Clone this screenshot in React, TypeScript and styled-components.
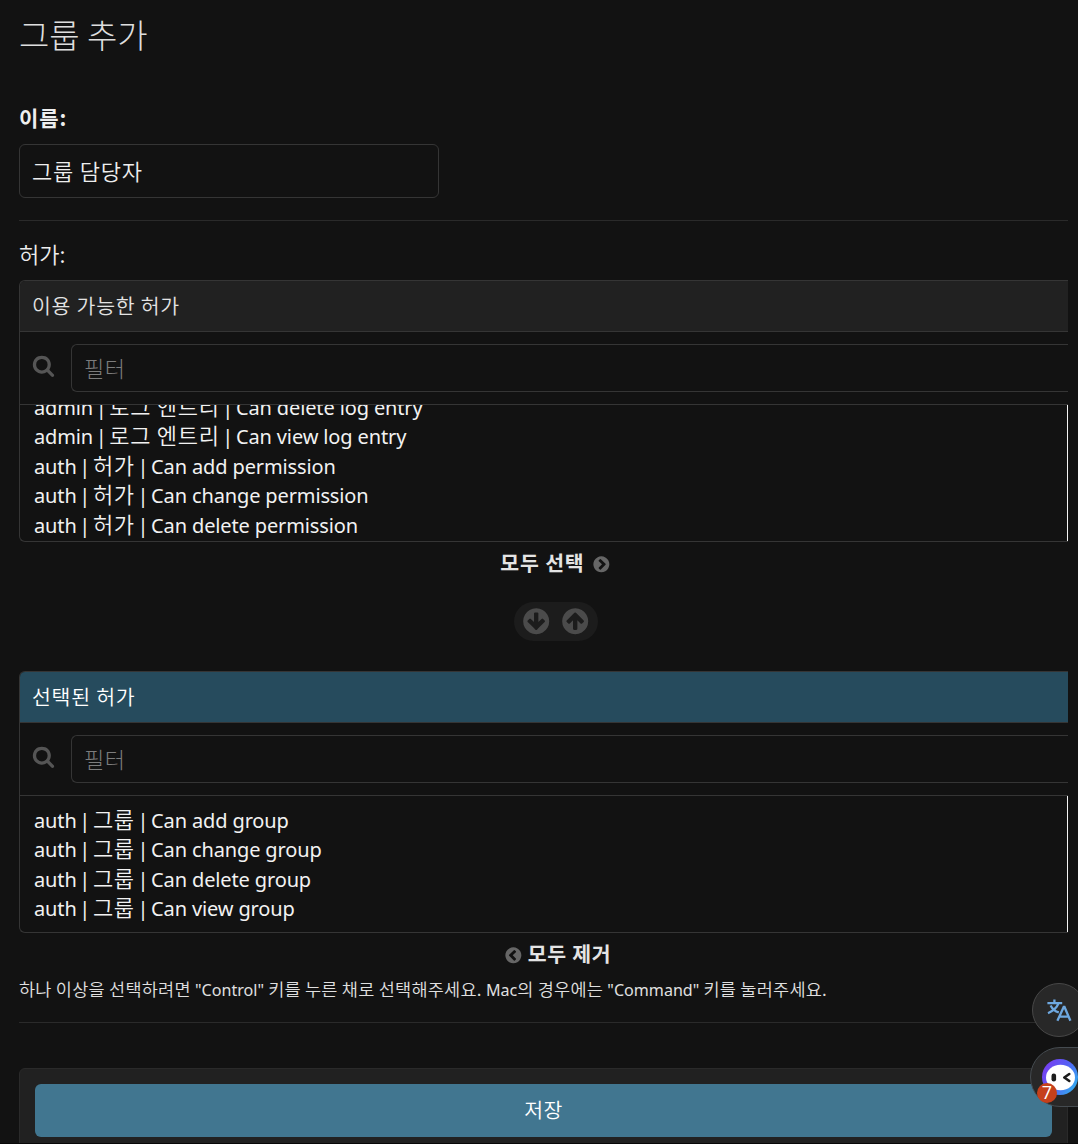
import React from "react";
import styled, { createGlobalStyle } from "styled-components";

const Global = createGlobalStyle`
  * { box-sizing: border-box; }
  body {
    margin: 0;
    background: #121212;
    color: #eee;
    font-family: "Noto Sans", "Noto Sans CJK KR", sans-serif;
    overflow: hidden;
  }
`;

const Page = styled.main`
  height: 1144px;
  padding: 0 10px 0 19px;
  display: flex;
  flex-direction: column;
  overflow: hidden;
  position: relative;
  border-bottom: 1px solid #080808;
`;

const Ko = styled.span<{ $size: number; $gap?: number; $weight?: number }>`
  font-family: "Noto Sans CJK KR", sans-serif;
  font-size: ${(p) => p.$size}px;
  letter-spacing: ${(p) => p.$gap ?? 0}px;
  font-weight: ${(p) => p.$weight ?? 350};
`;

const Title = styled.h1`
  margin: 0;
  height: 72px;
  flex: none;
  line-height: 68px;
  color: #dedede;
  font-weight: 300;
  white-space: nowrap;
`;

const FieldLabel = styled.label<{ $top: number; $height: number }>`
  display: block;
  flex: none;
  margin-top: ${(p) => p.$top}px;
  height: ${(p) => p.$height}px;
  line-height: 30px;
  white-space: nowrap;
`;

const NameInput = styled.div`
  width: 420px;
  height: 54px;
  flex: none;
  border: 1px solid #353535;
  border-radius: 6px;
  padding-left: 12px;
  line-height: 50px;
  white-space: nowrap;
`;

const Divider = styled.hr<{ $top: number }>`
  width: 100%;
  height: 1px;
  flex: none;
  border: 0;
  margin: ${(p) => p.$top}px 0 0;
  background: #2a2a2a;
`;

const Selector = styled.section`
  flex: none;
  height: 262px;
  display: flex;
  flex-direction: column;
  border: 1px solid #353535;
  border-right: 0;
  border-radius: 6px 0 0 6px;
  overflow: hidden;
`;

const SelectorHead = styled.h2<{ $chosen?: boolean }>`
  margin: 0;
  height: 51px;
  flex: none;
  padding-left: 12px;
  line-height: 47px;
  border-bottom: 1px solid #353535;
  background: ${(p) => (p.$chosen ? "#264b5d" : "#212121")};
  color: ${(p) => (p.$chosen ? "#fff" : "#e4e4e4")};
  white-space: nowrap;
`;

const FilterRow = styled.div`
  height: 73px;
  flex: none;
  display: flex;
  padding: 12px 0 12px 12px;
  border-bottom: 1px solid #353535;
`;

const FilterIcon = styled.svg`
  width: 23px;
  height: 23px;
  margin: 10px 16px 0 0;
  fill: #555;
`;

const FilterInput = styled.div`
  flex: 1;
  height: 48px;
  border: 1px solid #353535;
  border-right: 0;
  border-radius: 6px 0 0 6px;
  padding-left: 12px;
  line-height: 44px;
  color: #7c7c7c;
  white-space: nowrap;
`;

const OptionList = styled.ul<{ $scrolled?: boolean }>`
  margin: 0;
  flex: 1;
  min-height: 0;
  padding: ${(p) => (p.$scrolled ? "0 0 3px 14px" : "7.5px 0 0 14px")};
  display: flex;
  flex-direction: column;
  justify-content: ${(p) => (p.$scrolled ? "flex-end" : "flex-start")};
  overflow: hidden;
  list-style: none;
  border-right: 1px solid #f4f4f4;
`;

const Option = styled.li`
  flex: none;
  height: 29.5px;
  line-height: 29.5px;
  font-size: 20px;
  letter-spacing: -0.13px;
  white-space: pre;
  color: #f2f2f2;
`;

const Bar = styled.span`
  margin: 0 -2.4px;
`;

const BulkLink = styled.div<{ $shift: number; $gap: number }>`
  flex: none;
  height: 42px;
  display: flex;
  justify-content: center;
  align-items: center;
  gap: ${(p) => p.$gap}px;
  color: #e4e4e4;
  line-height: 40px;
  padding-left: ${(p) => p.$shift}px;

  > span {
    margin-top: -2px;
  }
`;

const ChevronBadge = styled.svg<{ $flip?: boolean }>`
  width: 18.7px;
  height: 18.7px;
  margin-top: 3px;
  fill: #666;
  transform: ${(p) => (p.$flip ? "rotate(180deg)" : "none")};
`;

const Chooser = styled.div`
  flex: none;
  align-self: center;
  width: 84px;
  height: 39px;
  margin: 18px 0 30px 25px;
  border-radius: 20px;
  background: #1c1c1c;
  display: flex;
  align-items: center;
  justify-content: center;
  gap: 8.6px;
`;

const ArrowBadge = styled.svg<{ $flip?: boolean }>`
  width: 30.4px;
  height: 30.4px;
  fill: #4b4b4b;
  transform: ${(p) => (p.$flip ? "rotate(180deg)" : "none")};
`;

const Help = styled.p`
  margin: 0;
  height: 47px;
  flex: none;
  line-height: 28px;
  font-size: 16.1px;
  color: #e0e0e0;
  white-space: nowrap;
`;

const SubmitRow = styled.div`
  margin-top: 45px;
  flex: none;
  height: 100px;
  padding: 15px;
  border: 1px solid #2a2a2a;
  border-radius: 6px;
  background: #212121;
`;

const SaveButton = styled.div`
  height: 53px;
  border-radius: 6px;
  background: #417690;
  color: #fff;
  text-align: center;
  line-height: 50px;
`;

const TranslateBubble = styled.div`
  position: absolute;
  left: 1032px;
  top: 983px;
  width: 54px;
  height: 54px;
  border-radius: 50%;
  border: 1px solid #484848;
  background: #282828;
  svg { display: block; margin: 13px 0 0 13px; }
`;

const AssistantTab = styled.div`
  position: absolute;
  left: 1030px;
  top: 1047px;
  width: 60px;
  height: 60px;
  border-radius: 30px 0 0 30px;
  border: 1px solid #454b50;
  background: #282828;
  svg { display: block; margin: 10px 0 0 10px; }
`;

const Count = styled.span`
  position: absolute;
  left: 6px;
  top: 35px;
  width: 20px;
  height: 20px;
  border-radius: 50%;
  background: #c5401c;
  color: #fff;
  font-family: "Open Sans", sans-serif;
  font-size: 18px;
  line-height: 19px;
  text-align: center;
`;

const SearchGlyph = () => (
  <FilterIcon viewBox="0 0 1792 1792">
    <path d="M1216 832q0-185-131.5-316.5t-316.5-131.5-316.5 131.5-131.5 316.5 131.5 316.5 316.5 131.5 316.5-131.5 131.5-316.5zm512 832q0 52-38 90t-90 38q-54 0-90-38l-343-342q-179 124-399 124-143 0-273.5-55.5t-225-150-150-225-55.5-273.5 55.5-273.5 150-225 225-150 273.5-55.5 273.5 55.5 225 150 150 225 55.5 273.5q0 220-124 399l343 343q37 37 37 90z" />
  </FilterIcon>
);

const DISC =
  "q0 209-103 385.5t-279.5 279.5-385.5 103-385.5-103-279.5-279.5-103-385.5 103-385.5 279.5-279.5 385.5-103 385.5 103 279.5 279.5 103 385.5z";

const Chevron = ({ flip }: { flip?: boolean }) => (
  <ChevronBadge $flip={flip} viewBox="0 0 1792 1792">
    <path d={"M1037 1395l102-102q19-19 19-45t-19-45l-307-307 307-307q19-19 19-45t-19-45l-102-102q-19-19-45-19t-45 19l-454 454q-19 19-19 45t19 45l454 454q19 19 45 19t45-19zm627-499" + DISC} />
  </ChevronBadge>
);

const Arrow = ({ flip }: { flip?: boolean }) => (
  <ArrowBadge $flip={flip} viewBox="0 0 1792 1792">
    <path d={"M1412 897q0-27-18-45l-91-91q-18-18-45-18t-45 18l-189 189v-502q0-26-19-45t-45-19h-128q-26 0-45 19t-19 45v502l-189-189q-19-19-45-19t-45 19l-91 91q-18 18-18 45t18 45l362 362 91 91q18 18 45 18t45-18l91-91 362-362q18-18 18-45zm252-1" + DISC} />
  </ArrowBadge>
);

type Permission = [string, string, string];

const available: Permission[] = [
  ["admin", "로그 엔트리", "Can delete log entry"],
  ["admin", "로그 엔트리", "Can view log entry"],
  ["auth", "허가", "Can add permission"],
  ["auth", "허가", "Can change permission"],
  ["auth", "허가", "Can delete permission"],
];

const chosen: Permission[] = [
  ["auth", "그룹", "Can add group"],
  ["auth", "그룹", "Can change group"],
  ["auth", "그룹", "Can delete group"],
  ["auth", "그룹", "Can view group"],
];

interface PanelProps {
  title: string;
  items: Permission[];
  chosen?: boolean;
}

const Panel = ({ title, items, chosen: isChosen }: PanelProps) => (
  <Selector>
    <SelectorHead $chosen={isChosen}>
      <Ko $size={20.5} $gap={0.75}>{title}</Ko>
    </SelectorHead>
    <FilterRow>
      <SearchGlyph />
      <FilterInput>
        <Ko $size={22} $gap={0.6} $weight={300}>필터</Ko>
      </FilterInput>
    </FilterRow>
    <OptionList $scrolled={!isChosen}>
      {items.map(([app, model, action]) => (
        <Option key={action}>
          {app} <Bar>|</Bar> <Ko $size={22} $gap={0.7}>{model}</Ko> <Bar>|</Bar> {action}
        </Option>
      ))}
    </OptionList>
  </Selector>
);

export default function App() {
  return (
    <Page>
      <Global />
      <Title><Ko $size={33} $weight={300}>그룹 추가</Ko></Title>
      <FieldLabel $top={30} $height={42}>
        <Ko $size={21} $gap={0.9} $weight={700}>이름:</Ko>
      </FieldLabel>
      <NameInput><Ko $size={22} $gap={0.8}>그룹 담당자</Ko></NameInput>
      <Divider $top={22} />
      <FieldLabel $top={17} $height={42}>
        <Ko $size={22}>허가:</Ko>
      </FieldLabel>
      <Panel title="이용 가능한 허가" items={available} />
      <BulkLink $shift={24} $gap={7.5}>
        <Ko $size={20.5} $gap={0.8} $weight={700}>모두 선택</Ko>
        <Chevron flip />
      </BulkLink>
      <Chooser>
        <Arrow />
        <Arrow flip />
      </Chooser>
      <Panel title="선택된 허가" items={chosen} chosen />
      <BulkLink $shift={28} $gap={5.5}>
        <Chevron />
        <Ko $size={20.5} $gap={0.7} $weight={700}>모두 제거</Ko>
      </BulkLink>
      <Help>
        <Ko $size={17.5} $gap={0.25}>하나 이상을 선택하려면 </Ko>"Control"
        <Ko $size={17.5} $gap={0.25}> 키를 누른 채로 선택해주세요. </Ko>Mac
        <Ko $size={17.5} $gap={0.25}>의 경우에는 </Ko>"Command"
        <Ko $size={17.5} $gap={0.25}> 키를 눌러주세요.</Ko>
      </Help>
      <Divider $top={0} />
      <SubmitRow>
        <SaveButton><Ko $size={20.5} $gap={0.4}>저장</Ko></SaveButton>
      </SubmitRow>
      <TranslateBubble>
        <svg width="28" height="28" viewBox="0 0 28 28" fill="none" stroke="#6ea8e0" strokeWidth="2.3">
          <path d="M8.4 2.6v3.4M1.4 6.2h14.8M12.6 6.2C11 10.6 7 14 2 16.2M4.6 8.4C6.4 12 9.4 14.4 12.8 15.4" />
          <path d="M11.4 23.8L17.7 10h.8l5.9 13.8M13.8 19.6h9" />
        </svg>
      </TranslateBubble>
      <AssistantTab>
        <svg width="38" height="38" viewBox="0 0 38 38">
          <defs>
            <linearGradient id="ring" x1="0" y1="0.2" x2="1" y2="0.8">
              <stop offset="0" stopColor="#7a3cf0" />
              <stop offset="0.5" stopColor="#5560f5" />
              <stop offset="1" stopColor="#30b4f0" />
            </linearGradient>
          </defs>
          <circle cx="19" cy="19" r="18" fill="url(#ring)" />
          <ellipse cx="19.5" cy="19.5" rx="14.5" ry="12.8" fill="#fff" />
          <rect x="10.5" y="15.5" width="4.6" height="8" rx="2.3" fill="#1c1c1c" />
          <path d="M28.3 16l-5 3.5 5 3.5" fill="none" stroke="#1c1c1c" strokeWidth="2.6" strokeLinecap="round" strokeLinejoin="round" />
        </svg>
        <Count>7</Count>
      </AssistantTab>
    </Page>
  );
}
